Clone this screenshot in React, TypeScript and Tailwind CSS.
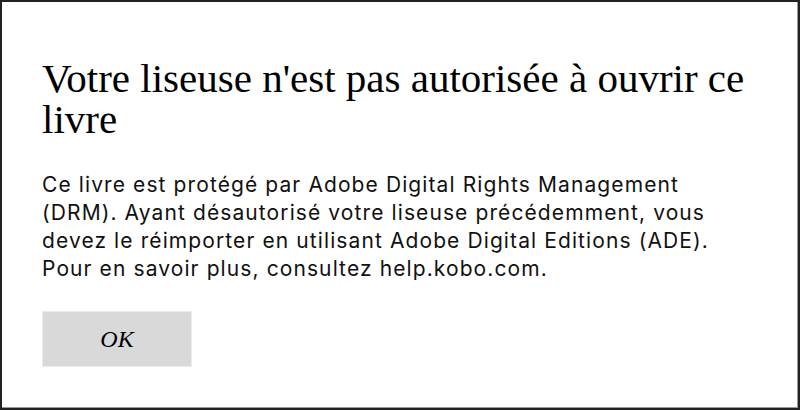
import React from 'react';

export default function App() {
    return (
        <div className="w-[800px] h-[410px] bg-white border-2 border-[#222] shadow-[inset_-1px_-1px_0_#9a9a9a] box-border">
            <div className="pl-[40px] pt-[56px]">
                <h1 className="w-[730px] text-[41px] leading-[41px] text-black font-['Liberation_Serif',serif]">
                    Votre liseuse n'est pas autorisée à ouvrir ce livre
                </h1>
                <p className="w-[700px] mt-[31px] text-[21px] leading-[28px] tracking-[1.1px] text-[#111] font-['Inter',sans-serif]">
                    Ce livre est protégé par Adobe Digital Rights Management (DRM). Ayant désautorisé votre liseuse précédemment, vous devez le réimporter en utilisant Adobe Digital Editions (ADE). Pour en savoir plus, consultez help.kobo.com.
                </p>
                <button
                    type="button"
                    className="mt-[28px] w-[150px] h-[56px] bg-[#d9d9d9] border border-[#ebebeb] text-[24px] italic text-black font-['Liberation_Serif',serif]"
                >
                    OK
                </button>
            </div>
        </div>
    );
}
